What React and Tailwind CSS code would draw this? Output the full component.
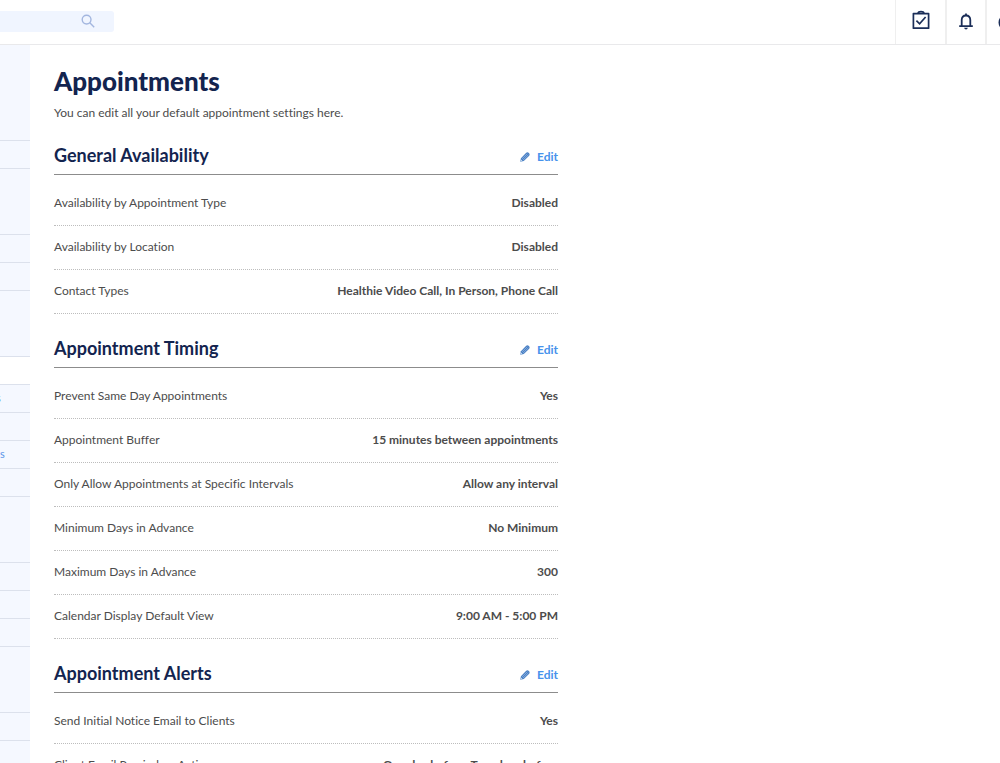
import React from "react";

const sections = [
  {
    title: "General Availability",
    rows: [
      ["Availability by Appointment Type", "Disabled"],
      ["Availability by Location", "Disabled"],
      ["Contact Types", "Healthie Video Call, In Person, Phone Call"],
    ],
  },
  {
    title: "Appointment Timing",
    rows: [
      ["Prevent Same Day Appointments", "Yes"],
      ["Appointment Buffer", "15 minutes between appointments"],
      ["Only Allow Appointments at Specific Intervals", "Allow any interval"],
      ["Minimum Days in Advance", "No Minimum"],
      ["Maximum Days in Advance", "300"],
      ["Calendar Display Default View", "9:00 AM - 5:00 PM"],
    ],
  },
  {
    title: "Appointment Alerts",
    rows: [
      ["Send Initial Notice Email to Clients", "Yes"],
      ["Client Email Reminders Active", "One day before, Two days before"],
    ],
  },
];

const navGroups = [
  { items: [{}] },
  { items: [{}, {}] },
  { items: [{ active: true }, { label: "s", clipped: true }, {}, { label: "s" }, {}] },
  { items: [{}, {}, {}] },
  { items: [{}, {}] },
];

function Pencil() {
  return (
    <svg viewBox="0 0 10 10" className="size-[10px]" aria-hidden="true">
      <path d="M0.3 9.7 0.9 6.2 6.2 0.8Q7.6 -0.2 8.9 1.1T9.2 3.8L3.8 9.1Z" fill="#4a80c4" />
      <path d="M1.9 7 7.3 1.7M3 8.1 8.4 2.8" stroke="#b9d3f2" strokeWidth="0.5" fill="none" />
      <path d="M1 7.6 2.4 9 .9 9.3Z" fill="#dce8f7" />
    </svg>
  );
}

function Header() {
  return (
    <header className="flex h-[45px] shrink-0 justify-between border-b border-[#e9e9eb]">
      <div className="relative mt-[11px] h-[21px] w-[114px]">
        <input
          type="search"
          aria-label="Search"
          className="block h-full w-full rounded-r-[3px] bg-[#f0f5ff] pr-9 outline-none"
        />
        <svg viewBox="0 0 14 14" className="pointer-events-none absolute top-[3px] right-[19px] size-[14px]" fill="none" stroke="#a3b6df" strokeWidth="1.4" aria-hidden="true">
          <circle cx="5.6" cy="5.6" r="4.4" />
          <path d="m8.8 8.8 4.4 4.4" />
        </svg>
      </div>
      <div className="flex">
        <button aria-label="Tasks" className="flex w-[50px] justify-center border-l border-[#efefef] pt-[10px]">
          <svg viewBox="0 0 20 22" className="h-[22px] w-5" fill="none" stroke="#1b2e58" strokeWidth="1.7" aria-hidden="true">
            <path d="M2.4 3.6h15.2v14.6H2.4z" strokeLinejoin="round" />
            <path d="M7 3.4Q7.4 1.7 10 1.7T13 3.4" />
            <path d="m5.4 10.6 3.2 3.2 6-6.8" />
          </svg>
        </button>
        <button aria-label="Notifications" className="flex w-10 justify-center border-l-2 border-[#efefef] pt-[13px]">
          <svg viewBox="0 0 16 18" className="h-[18px] w-4" fill="none" stroke="#1b2e58" strokeWidth="1.8" aria-hidden="true">
            <path d="M3.7 13V7Q3.7 2.5 8 2.5T12.3 7v6" />
            <path d="M1.2 13.1h13.6M8 .5v2" />
            <path d="M6.1 14.8h3.8Q9.5 16.6 8 16.6T6.1 14.8Z" fill="#1b2e58" stroke="none" />
          </svg>
        </button>
        <button aria-label="Help" className="w-[15px] overflow-hidden border-l-2 border-[#efefef]">
          <svg viewBox="0 0 13 44" className="h-11 w-[13px]" fill="none" stroke="#1b2e58" strokeWidth="1.6" aria-hidden="true">
            <circle cx="19.5" cy="22.5" r="7.2" />
          </svg>
        </button>
      </div>
    </header>
  );
}

function Sidebar() {
  return (
    <nav aria-label="Settings" className="w-[30px] shrink-0 overflow-hidden bg-[#f5f8ff] pt-[30px]">
      {navGroups.map((group, g) => (
        <div key={g}>
          <div className="h-[66px] border-b border-[#dce1ec]" />
          {group.items.map((item, i) => (
            <a
              key={i}
              href="#"
              className={
                "flex h-7 items-center border-b border-[#dce1ec] text-[11px] text-[#5a96e8] " +
                (item.active ? "bg-white" : "")
              }
            >
              <span className={item.clipped ? "-ml-1" : ""}>{item.label}</span>
            </a>
          ))}
        </div>
      ))}
    </nav>
  );
}

function Section({ title, rows }) {
  return (
    <section className="mb-[22px]">
      <div className="flex h-8 items-start justify-between border-b border-[#8c8c8c]">
        <h2 className="text-lg leading-6 font-bold text-[#13244f]">{title}</h2>
        <button className="flex items-center gap-[7px] pt-1 text-xs leading-5 font-bold text-[#4792ec]">
          <Pencil />
          Edit
        </button>
      </div>
      <dl className="pt-[7px]">
        {rows.map(([label, value]) => (
          <div key={label} className="flex h-11 items-center justify-between border-b border-dotted border-[#bdbdbd] pb-px text-xs text-[#4c4c4c]">
            <dt>{label}</dt>
            <dd className="font-bold">{value}</dd>
          </div>
        ))}
      </dl>
    </section>
  );
}

export default function App() {
  return (
    <div className="flex h-screen flex-col overflow-hidden bg-white font-['Lato',sans-serif] [font-variant-ligatures:none]">
      <Header />
      <div className="flex min-h-0 flex-1">
        <Sidebar />
        <main className="min-w-0 flex-1 overflow-hidden px-6 pt-5">
          <div className="max-w-[504px]">
            <h1 className="text-[26px] leading-8 font-black text-[#13244f]">Appointments</h1>
            <p className="mt-2 mb-[22px] text-xs leading-4 text-[#4c4c4c]">
              You can edit all your default appointment settings here.
            </p>
            {sections.map((s) => (
              <Section key={s.title} {...s} />
            ))}
          </div>
        </main>
      </div>
    </div>
  );
}
